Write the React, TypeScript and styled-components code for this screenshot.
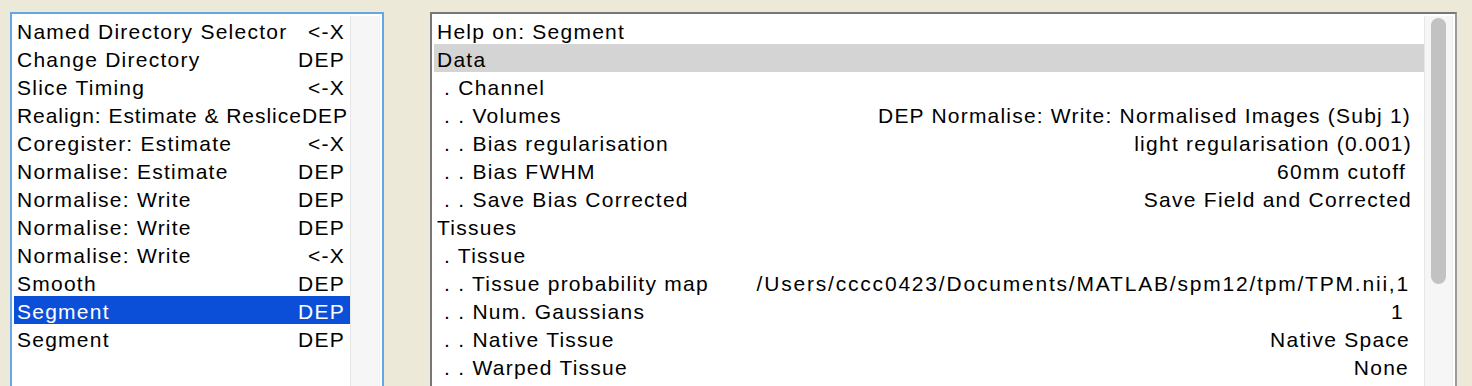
import React from "react";
import styled, { createGlobalStyle } from "styled-components";

const Global = createGlobalStyle`
  html, body { margin: 0; padding: 0; background: #ece9d8; overflow: hidden; }
  body { font-family: "Liberation Sans", Arial, Helvetica, sans-serif; }
`;

const Page = styled.div`
  display: flex;
  align-items: flex-start;
  gap: 46px;
  padding: 12px 0 0 10px;
  width: 1472px;
  height: 386px;
  box-sizing: border-box;
  overflow: hidden;
`;

const ModuleBox = styled.div`
  width: 374px;
  height: 400px;
  box-sizing: border-box;
  border: 2px solid #65a6e6;
  background: #fff;
  padding: 2px 2px 0 2px;
  display: flex;
`;

const List = styled.div`
  flex: 1;
  min-width: 0;
  display: flex;
  flex-direction: column;
`;

const Track = styled.div<{ $w: number }>`
  width: ${(p) => p.$w}px;
  flex: none;
  align-self: stretch;
  box-sizing: border-box;
  background: #f6f6f6;
  border-left: 1px solid #e6e6e6;
  border-right: 1px solid #efefef;
  display: flex;
  justify-content: center;
  padding-top: 2px;
`;

const Thumb = styled.div`
  width: 15px;
  height: 266px;
  border-radius: 8px;
  background: #c2c2c2;
`;

const Row = styled.div<{ $sel?: boolean; $grey?: boolean; $pl: number; $pr: number; $ls?: number }>`
  height: 28px;
  box-sizing: border-box;
  padding: 4px ${(p) => p.$pr}px 0 ${(p) => p.$pl}px;
  line-height: 24px;
  font-size: 21px;
  letter-spacing: ${(p) => p.$ls ?? 1.25}px;
  white-space: nowrap;
  display: flex;
  color: ${(p) => (p.$sel ? "#fff" : "#000")};
  background: ${(p) => (p.$sel ? "#0b4fd8" : p.$grey ? "#d4d4d4" : "transparent")};
`;

const Name = styled.span`
  flex: none;
  white-space: pre;
`;

const Value = styled.span<{ $shift?: number; $ls?: number }>`
  margin-left: auto;
  padding-right: ${(p) => p.$shift ?? 0}px;
  ${(p) => (p.$ls ? `letter-spacing: ${p.$ls}px;` : "")}
`;

const HelpBox = styled.div`
  width: 1027px;
  height: 400px;
  box-sizing: border-box;
  border: 2px solid #777;
  border-right-color: #9a9a9a;
  background: #fff;
  padding: 2px 2px 0 2px;
  display: flex;
`;

const modules: [string, string, number?][] = [
  ["Named Directory Selector", "<-X"],
  ["Change Directory", "DEP"],
  ["Slice Timing", "<-X"],
  ["Realign: Estimate & Reslice", "DEP", 0.95],
  ["Coregister: Estimate", "<-X"],
  ["Normalise: Estimate", "DEP"],
  ["Normalise: Write", "DEP"],
  ["Normalise: Write", "DEP"],
  ["Normalise: Write", "<-X"],
  ["Smooth", "DEP"],
  ["Segment", "DEP"],
  ["Segment", "DEP"],
];

const help: { l: string; v?: string; s?: number; ls?: number; grey?: boolean }[] = [
  { l: "Help on: Segment" },
  { l: "Data", grey: true },
  { l: " . Channel" },
  { l: " . . Volumes", v: "DEP Normalise: Write: Normalised Images (Subj 1)", s: 1, ls: 1.2 },
  { l: " . . Bias regularisation", v: "light regularisation (0.001)", s: -3 },
  { l: " . . Bias FWHM", v: "60mm cutoff", s: 6 },
  { l: " . . Save Bias Corrected", v: "Save Field and Corrected", s: -1 },
  { l: "Tissues" },
  { l: " . Tissue" },
  { l: " . . Tissue probability map", v: "/Users/cccc0423/Documents/MATLAB/spm12/tpm/TPM.nii,1", s: 2, ls: 1.8 },
  { l: " . . Num. Gaussians", v: "1", s: 8 },
  { l: " . . Native Tissue", v: "Native Space", s: 2 },
  { l: " . . Warped Tissue", v: "None", s: 3 },
];

export default function App() {
  return (
    <>
      <Global />
      <Page>
        <ModuleBox>
          <List>
            {modules.map(([n, t, ls], i) => (
              <Row key={i} $sel={i === 10} $pl={3} $pr={ls ? 2 : 5} $ls={ls}>
                <Name>{n}</Name>
                <Value>{t}</Value>
              </Row>
            ))}
          </List>
          <Track $w={30} />
        </ModuleBox>
        <HelpBox>
          <List>
            {help.map((h, i) => (
              <Row key={i} $grey={h.grey} $pl={3} $pr={12}>
                <Name>{h.l}</Name>
                {h.v && (
                  <Value $shift={h.s} $ls={h.ls}>
                    {h.v}
                  </Value>
                )}
              </Row>
            ))}
          </List>
          <Track $w={29}>
            <Thumb />
          </Track>
        </HelpBox>
      </Page>
    </>
  );
}
